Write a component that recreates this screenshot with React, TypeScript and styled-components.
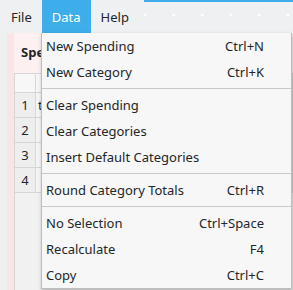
import React from "react";
import styled, { createGlobalStyle } from "styled-components";

const Global = createGlobalStyle`
  html, body { margin: 0; padding: 0; }
  body {
    font-family: "Noto Sans", "DejaVu Sans", sans-serif;
    font-size: 13px;
    color: #232629;
    background: #eff0f1;
  }
`;

const Window = styled.div`
  position: relative;
  width: 293px;
  height: 290px;
  overflow: hidden;
  display: flex;
  flex-direction: column;
  background: #eff0f1;
`;

const MenuBar = styled.div`
  height: 33px;
  flex: none;
  display: flex;
  align-items: stretch;
  padding-left: 1px;
  background: #eff0f1;
`;

const MenuTitle = styled.div<{ $active?: boolean }>`
  display: flex;
  align-items: center;
  padding: 0 10px;
  background: ${(p) => (p.$active ? "#3daee9" : "transparent")};
  color: ${(p) => (p.$active ? "#ffffff" : "#232629")};
`;

const Grip = styled.div`
  flex: 1;
  position: relative;
  margin-left: 5px;
  border-top: 2px solid #3daee9;
  background-image: radial-gradient(circle, rgba(255, 255, 255, 0.95) 0 1.2px, transparent 1.7px);
  background-size: 28.5px 4px;
  background-position: -13px 11px;
  background-repeat: repeat-x;
`;

const Body = styled.div`
  flex: 1;
  display: flex;
  min-height: 0;
`;

const Gutter = styled.div`
  width: 7px;
  flex: none;
  background: #eff0f1;
`;

const Frame = styled.div`
  flex: 1;
  display: flex;
  padding-left: 7px;
  background: #fbe4e6;
`;

const Panel = styled.div`
  flex: 1;
  display: flex;
  flex-direction: column;
  background: #fdf0f0;
`;

const PanelTitle = styled.div`
  height: 40px;
  flex: none;
  display: flex;
  align-items: center;
  padding: 0 0 2px 7px;
  box-sizing: border-box;
  font-weight: bold;
`;

const Table = styled.div`
  flex: 1;
  display: grid;
  grid-template-columns: 21px 1fr;
  grid-auto-rows: 25px;
  grid-template-rows: 19px;
  align-content: start;
  background: #f1f1f1;
  border-left: 1px solid #d6d6d6;
  border-top: 1px solid #d6d6d6;
`;

const Cell = styled.div<{ $head?: boolean }>`
  display: flex;
  align-items: center;
  justify-content: ${(p) => (p.$head ? "center" : "flex-start")};
  padding-left: ${(p) => (p.$head ? "0" : "2px")};
  background: ${(p) => (p.$head ? "#eeeeee" : "#f5f5f5")};
  border-right: 1px solid #d6d6d6;
  border-bottom: 1px solid #d6d6d6;
  white-space: nowrap;
  overflow: hidden;
`;

const Corner = styled(Cell)`
  background: #f7f7f7;
`;

const Menu = styled.div`
  position: absolute;
  top: 33px;
  left: 41px;
  width: 251px;
  padding: 0;
  background: #f7f7f7;
  border: 1px solid #bdbdbd;
  border-top: none;
  box-shadow: 1px 2px 4px rgba(0, 0, 0, 0.28);
  box-sizing: border-box;
`;

const Item = styled.div`
  height: 26px;
  display: flex;
  align-items: center;
  justify-content: space-between;
  padding: 0 27px 0 4px;
  white-space: nowrap;
`;

const Shortcut = styled.span`
  color: #232629;
`;

const Separator = styled.div`
  height: 7px;
  display: flex;
  align-items: center;
  &::after {
    content: "";
    flex: 1;
    height: 1px;
    background: #c8c9ca;
  }
`;

type Entry = { label: string; key?: string } | "sep";

const entries: Entry[] = [
  { label: "New Spending", key: "Ctrl+N" },
  { label: "New Category", key: "Ctrl+K" },
  "sep",
  { label: "Clear Spending" },
  { label: "Clear Categories" },
  { label: "Insert Default Categories" },
  "sep",
  { label: "Round Category Totals", key: "Ctrl+R" },
  "sep",
  { label: "No Selection", key: "Ctrl+Space" },
  { label: "Recalculate", key: "F4" },
  { label: "Copy", key: "Ctrl+C" },
];

const rows = ["t", "", "", ""];

export default function App() {
  return (
    <>
      <Global />
      <Window>
        <MenuBar>
          <MenuTitle>File</MenuTitle>
          <MenuTitle $active>Data</MenuTitle>
          <MenuTitle>Help</MenuTitle>
          <Grip />
        </MenuBar>
        <Body>
          <Gutter />
          <Frame>
            <Panel>
              <PanelTitle>Spending</PanelTitle>
              <Table>
                <Corner $head />
                <Corner />
                {rows.map((r, i) => (
                  <React.Fragment key={i}>
                    <Cell $head>{i + 1}</Cell>
                    <Cell>{r}</Cell>
                  </React.Fragment>
                ))}
              </Table>
            </Panel>
          </Frame>
        </Body>
        <Menu>
          {entries.map((e, i) =>
            e === "sep" ? (
              <Separator key={i} />
            ) : (
              <Item key={i}>
                <span>{e.label}</span>
                {e.key && <Shortcut>{e.key}</Shortcut>}
              </Item>
            )
          )}
        </Menu>
      </Window>
    </>
  );
}
